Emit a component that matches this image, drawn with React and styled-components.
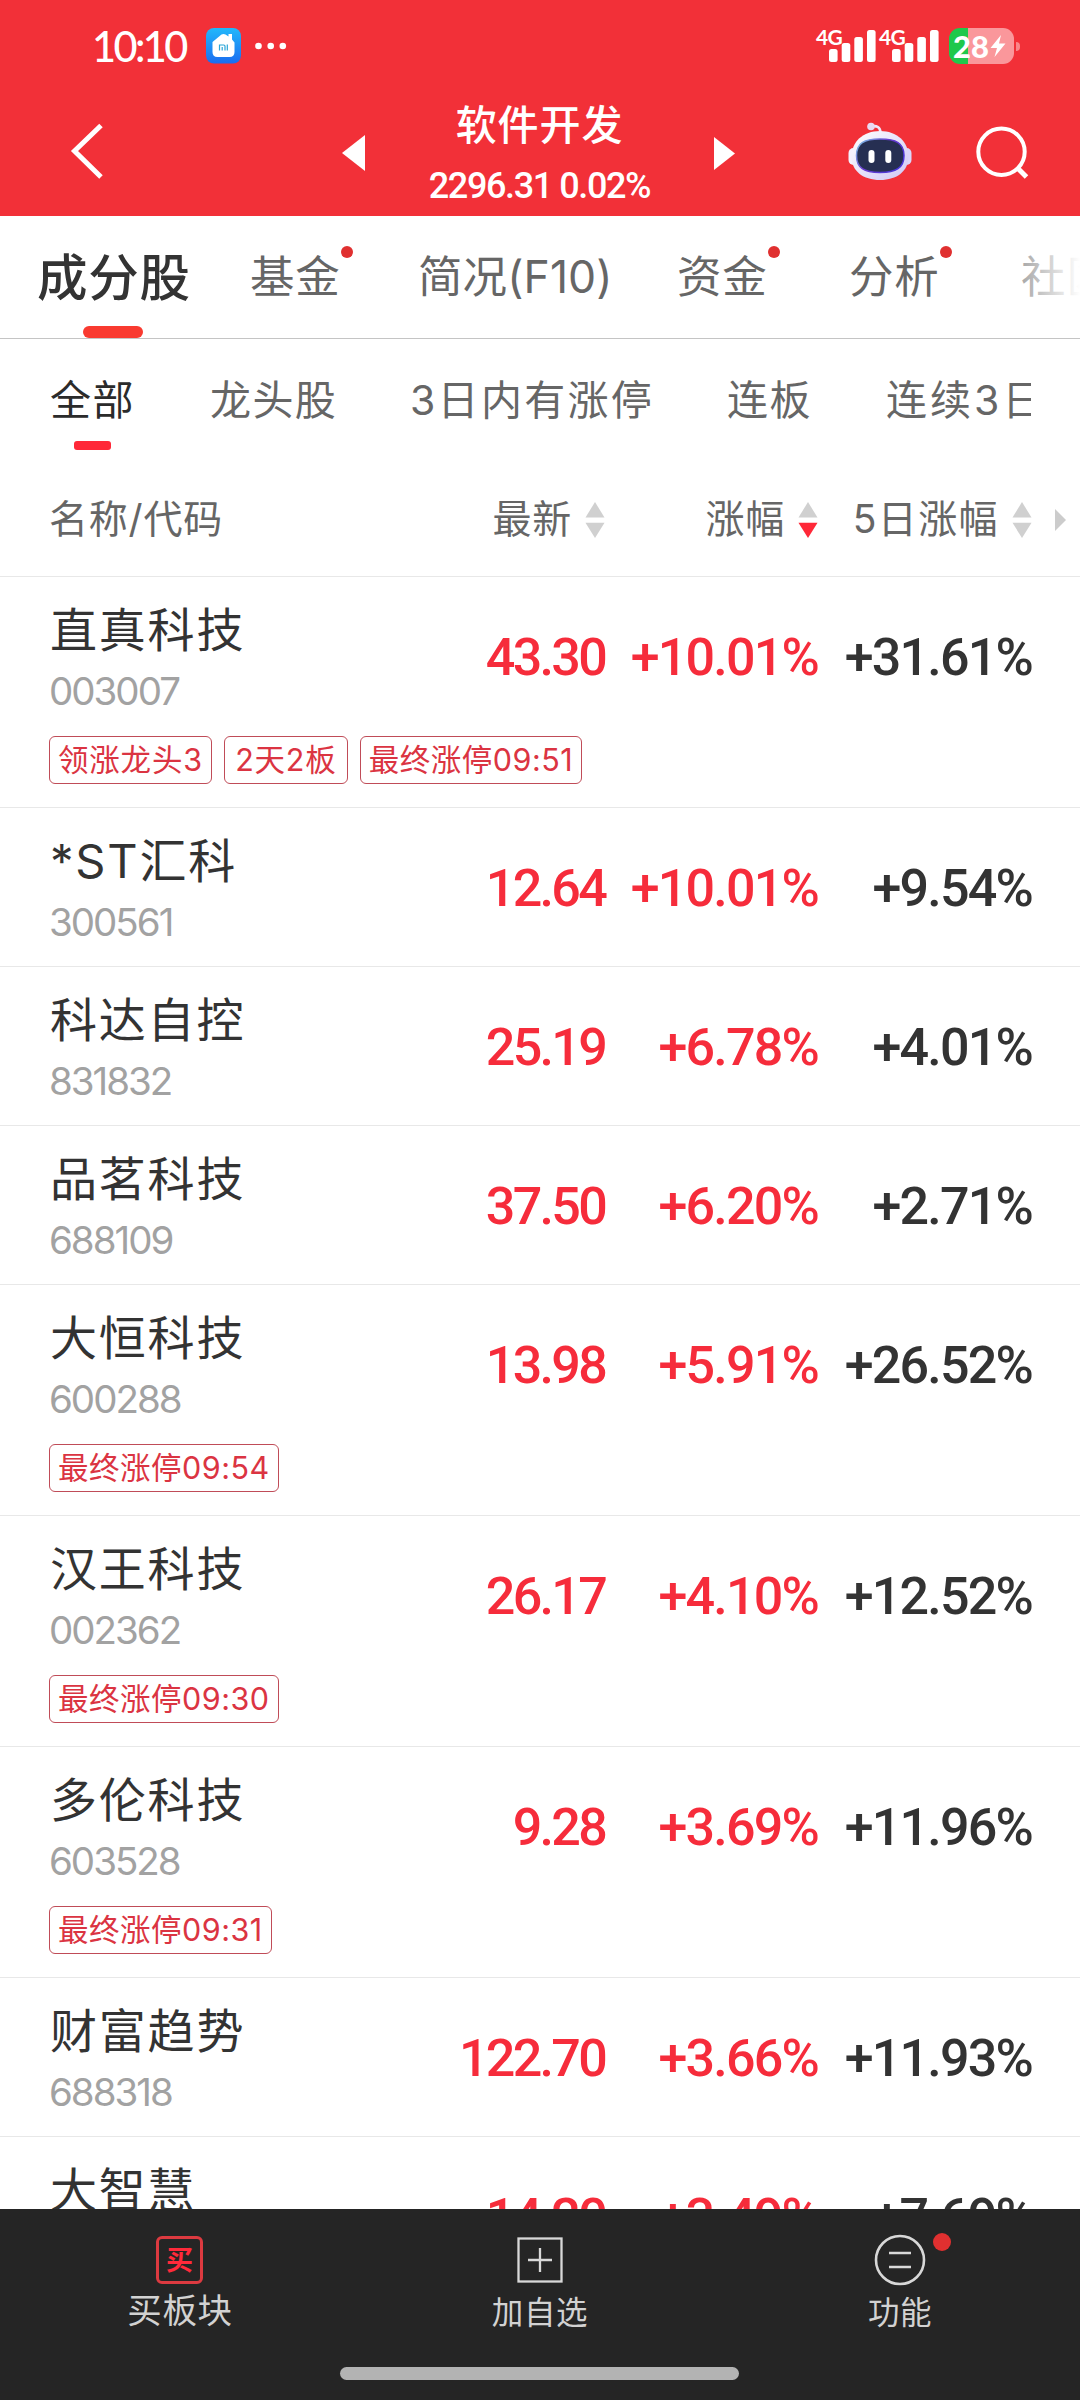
import React from 'react';
import styled, { createGlobalStyle } from 'styled-components';

const Global = createGlobalStyle`
  *, *::before, *::after { box-sizing: border-box; }
  html, body { margin: 0; padding: 0; background: #fff; }
  body { font-family: Inter, "Noto Sans CJK SC", sans-serif; color: #333; }
  svg { display: block; }
`;

const Screen = styled.div`
  width: 1080px;
  height: 2400px;
  display: flex;
  flex-direction: column;
  overflow: hidden;
  background: #fff;
`;

const Top = styled.header`
  flex: none;
  height: 216px;
  background: #f23038;
  color: #fff;
`;

const StatusBar = styled.div`
  height: 92px;
  padding: 0 60px 0 92px;
  display: flex;
  align-items: center;
`;

const Clock = styled.span`
  width: 114px;
  font: 500 41.5px/60px Lato, "Noto Sans", sans-serif;
  letter-spacing: -2.6px;
  white-space: nowrap;
`;

const Dots = styled.svg`
  margin-left: 14px;
`;

const StatusRight = styled.div`
  margin-left: auto;
  display: flex;
  align-items: center;
`;

const SignalBox = styled.div`
  width: 63px;
  height: 34px;
  position: relative;
`;

const Net = styled.span`
  position: absolute;
  left: 0;
  top: -1px;
  font: 700 21px/18px Lato, sans-serif;
  letter-spacing: -0.6px;
`;

const Battery = styled.div`
  margin-left: 7px;
  width: 65px;
  height: 36px;
  border-radius: 11px;
  padding-left: 4px;
  display: flex;
  align-items: center;
  background: linear-gradient(90deg, #1fc84b 0 19px, #fa979b 19px);
  font: 900 31px/36px Lato, sans-serif;
`;

const Nub = styled.i`
  width: 4px;
  height: 9px;
  margin-left: 2px;
  border-radius: 0 4px 4px 0;
  background: #f9868a;
`;

const NavBar = styled.div`
  height: 124px;
  display: grid;
  grid-template-columns: 342px 1fr 342px;
`;

const NavSide = styled.div`
  display: flex;
  align-items: flex-start;
  padding: ${(p) => p.$pad};
  gap: ${(p) => p.$gap || '0'};
`;

const NavCenter = styled.div`
  display: flex;
  justify-content: space-between;
  align-items: flex-start;
  margin-right: 3px;
`;

const Arrow = styled.svg`
  margin-top: ${(p) => p.$top}px;
`;

const Titles = styled.div`
  padding-top: 5px;
  text-align: center;
  white-space: nowrap;
`;

const Title = styled.div`
  font: 500 41px/50px "Noto Sans CJK SC", sans-serif;
  letter-spacing: 0.9px;
`;

const IndexValue = styled.div`
  margin-top: 14px;
  font: 500 36px/50px Roboto, sans-serif;
  letter-spacing: -1.4px;
`;

const Tabs = styled.nav`
  flex: none;
  height: 123px;
  padding-left: 37px;
  display: flex;
  border-bottom: 1px solid #c4c4c4;
  position: relative;
  overflow: hidden;
`;

const Tab = styled.div`
  flex: none;
  width: ${(p) => p.$w}px;
  position: relative;
  white-space: nowrap;
  font-size: ${(p) => (p.$active ? 50.5 : 44.5)}px;
  font-weight: ${(p) => (p.$active ? 500 : 400)};
  letter-spacing: ${(p) => p.$ls ?? 0.8}px;
  line-height: 123px;
  color: ${(p) => (p.$active ? '#333' : '#666')};
`;

const TabLine = styled.i`
  position: absolute;
  left: 46px;
  bottom: 0;
  width: 60px;
  height: 12px;
  border-radius: 6px;
  background: #f93a30;
`;

const RedDot = styled.i`
  position: absolute;
  left: ${(p) => p.$x}px;
  top: ${(p) => p.$y}px;
  width: ${(p) => p.$d}px;
  height: ${(p) => p.$d}px;
  border-radius: 50%;
  background: #e03030;
`;

const Fade = styled.i`
  position: absolute;
  right: 0;
  top: 0;
  width: 104px;
  height: 100%;
  background: linear-gradient(90deg, rgba(255, 255, 255, 0), #fff);
`;

const Filters = styled.nav`
  flex: none;
  height: 124px;
  margin: 0 49px 0 50px;
  display: flex;
  overflow: hidden;
`;

const Filter = styled.div`
  flex: none;
  width: ${(p) => p.$w}px;
  position: relative;
  white-space: nowrap;
  font-size: 41px;
  letter-spacing: ${(p) => p.$ls ?? 1.4}px;
  line-height: 122px;
  color: ${(p) => (p.$active ? '#2b2b2b' : '#666')};
`;

const FilterLine = styled.i`
  position: absolute;
  left: 24px;
  top: 102px;
  width: 37px;
  height: 9px;
  border-radius: 3px;
  background: #ff2838;
`;

const columns = `
  display: grid;
  grid-template-columns: 1fr 180px 213px 214px;
  padding: 0 48px 0 49px;
`;

const ColumnHead = styled.div`
  flex: none;
  height: 114px;
  ${columns}
  padding-right: 0;
  grid-template-columns: 1fr 180px 213px 214px 48px;
  align-items: center;
  border-bottom: 1px solid #e8e8e8;
  font-size: 39px;
  letter-spacing: 0.8px;
  color: #666;
  white-space: nowrap;
`;

const HeadCell = styled.div`
  display: flex;
  align-items: center;
  justify-content: ${(p) => (p.$start ? 'flex-start' : 'flex-end')};
  gap: 13px;
  height: 110px;
`;

const HeadText = styled.span`
  line-height: 108px;
  padding-bottom: 2px;
  letter-spacing: ${(p) => p.$ls ?? 0.8}px;
`;

const More = styled.svg`
  margin-left: 23px;
`;

const List = styled.main`
  flex: 1;
  min-height: 0;
  overflow: hidden;
`;

const Row = styled.section`
  height: ${(p) => (p.$tall ? 231 : 159)}px;
  ${columns}
  grid-template-rows: 159px auto;
  border-bottom: 1px solid #e8e8e8;
`;

const Identity = styled.div`
  padding: 23px 0 0 1px;
  white-space: nowrap;
`;

const Name = styled.div`
  font-size: 47px;
  letter-spacing: 1.8px;
  line-height: 60px;
  color: #333;
`;

const Code = styled.div`
  margin-top: 11px;
  font: 400 38.5px/40px Inter, sans-serif;
  letter-spacing: -2px;
  margin-left: -1px;
  color: #a2a2a2;
`;

const Num = styled.div`
  padding-top: 51px;
  font: 500 52px/60px Roboto, sans-serif;
  letter-spacing: ${(p) => p.$ls ?? -1.8}px;
  text-align: right;
  white-space: nowrap;
  color: ${(p) => (p.$up ? '#f62c3b' : '#333')};
`;

const Tags = styled.div`
  grid-column: 1 / -1;
  display: flex;
  gap: 12px;
`;

const Tag = styled.span`
  height: 48px;
  min-width: 124px;
  padding: 0 8px;
  border: 1.5px solid #c04c58;
  border-radius: 6px;
  font-size: 30.5px;
  letter-spacing: ${(p) => p.$ls}px;
  line-height: 45px;
  text-align: center;
  color: #db3442;
  white-space: nowrap;
`;

const Bottom = styled.footer`
  flex: none;
  height: 191px;
  background: #252525;
`;

const Actions = styled.div`
  height: 158px;
  display: grid;
  grid-template-columns: repeat(3, 360px);
`;

const Action = styled.div`
  display: flex;
  flex-direction: column;
  align-items: center;
  color: #d2d2d2;
`;

const IconSlot = styled.div`
  height: 52px;
  margin-top: 25px;
  display: flex;
  align-items: center;
  position: relative;
`;

const BuyIcon = styled.div`
  width: 47px;
  height: 48px;
  margin: 0 1px 1px 0;
  border: 3px solid #dc3a40;
  border-radius: 6px;
  text-align: center;
  font: 700 27px/40px "Noto Sans CJK SC", sans-serif;
  color: #ff2a3a;
`;

const ActionLabel = styled.div`
  font-size: ${(p) => p.$size}px;
  letter-spacing: 0.6px;
  line-height: 50px;
  margin-top: ${(p) => p.$top}px;
`;

const HomeBar = styled.div`
  width: 399px;
  height: 13px;
  margin: 0 0 0 340px;
  border-radius: 7px;
  background: #b3b3b3;
`;

const Signal = () => (
  <SignalBox>
    <Net>4G</Net>
    <svg width="63" height="34" viewBox="0 0 63 34" fill="#fff">
      <rect x="13" y="20" width="8.6" height="13" rx="2.5" />
      <rect x="25.7" y="14" width="8.6" height="19" rx="2.5" />
      <rect x="38.3" y="8" width="8.6" height="25" rx="2.5" />
      <rect x="51" y="1" width="8.6" height="32" rx="2.5" />
    </svg>
  </SignalBox>
);

const HomeApp = () => (
  <svg width="35" height="36" viewBox="0 0 35 36">
    <defs>
      <linearGradient id="app" x1="0" y1="0" x2="0" y2="1">
        <stop offset="0" stopColor="#22b8fb" />
        <stop offset="1" stopColor="#1a6cf0" />
      </linearGradient>
    </defs>
    <rect width="35" height="35.5" rx="8" fill="url(#app)" />
    <path d="M6.5 14 15.500 6.500q2-1.200 4 0l3 2V6h3.500v5.500l2.500 3v9.500q0 5-5 5H11.500q-5 0-5-5z" fill="#fff" />
    <path d="M13.500 22.500V17h4.200q1.300 0 1.300 1.300V22.500M16.200 19V22.500M21.300 16.400V22.500" fill="none" stroke="#2aa5d8" strokeWidth="1.200" />
  </svg>
);

const Robot = () => (
  <svg width="64" height="60" viewBox="0 0 64 60">
    <defs>
      <linearGradient id="shell" x1="0" y1="0" x2="1" y2="1">
        <stop offset="0" stopColor="#ffffff" />
        <stop offset="1" stopColor="#cfc6f5" />
      </linearGradient>
      <linearGradient id="rim" x1="0" y1="0" x2="1" y2="0.6">
        <stop offset="0" stopColor="#7fd0e8" />
        <stop offset="0.5" stopColor="#6a3ccf" />
        <stop offset="1" stopColor="#4a35d8" />
      </linearGradient>
    </defs>
    <path d="M23 5.500q9-2 9.500 6" fill="none" stroke="#efe6fa" strokeWidth="2.600" />
    <circle cx="23" cy="5.500" r="3.800" fill="#e9d9f2" />
    <rect x="0.500" y="27" width="10" height="17" rx="5" fill="#f4f0fd" />
    <rect x="53.500" y="27" width="10" height="17" rx="5" fill="#dcd6fa" />
    <path d="M32 10C49 10 60.500 21 60.500 35.500S49 59 32 59 3.500 50 3.500 35.500 15 10 32 10z" fill="url(#shell)" />
    <path d="M32 18C48 18 56 22 56 34.500S48 51.500 32 51.500 8.500 47 8.500 34.500 16 18 32 18z" fill="#262f52" stroke="url(#rim)" strokeWidth="1.500" />
    <rect x="20.500" y="29" width="6" height="13" rx="3" fill="#fff" />
    <rect x="37.300" y="29" width="6" height="13" rx="3" fill="#fff" />
  </svg>
);

const Sort = ({ desc }) => (
  <svg width="20" height="38" viewBox="0 0 20 38">
    <path d="M10 1 19.500 16.500H.5z" fill="#d0d0d0" />
    <path d="M10 37 .5 21.800H19.500z" fill={desc ? '#ff2838' : '#d0d0d0'} />
  </svg>
);

const rows = [
  { name: '直真科技', code: '003007', price: '43.30', chg: '+10.01%', five: '+31.61%', tags: ['领涨龙头3', '2天2板', '最终涨停09:51'] },
  { name: '*ST汇科', code: '300561', price: '12.64', chg: '+10.01%', five: '+9.54%' },
  { name: '科达自控', code: '831832', price: '25.19', chg: '+6.78%', five: '+4.01%' },
  { name: '品茗科技', code: '688109', price: '37.50', chg: '+6.20%', five: '+2.71%' },
  { name: '大恒科技', code: '600288', price: '13.98', chg: '+5.91%', five: '+26.52%', tags: ['最终涨停09:54'] },
  { name: '汉王科技', code: '002362', price: '26.17', chg: '+4.10%', five: '+12.52%', tags: ['最终涨停09:30'] },
  { name: '多伦科技', code: '603528', price: '9.28', chg: '+3.69%', five: '+11.96%', tags: ['最终涨停09:31'] },
  { name: '财富趋势', code: '688318', price: '122.70', chg: '+3.66%', five: '+11.93%' },
  { name: '大智慧', price: '14.20', chg: '+3.49%', five: '+7.69%' },
];

export default function App() {
  return (
    <Screen>
      <Global />
      <Top>
        <StatusBar>
          <Clock>10:10</Clock>
          <HomeApp />
          <Dots width="32" height="8" viewBox="0 0 32 8" fill="#fff">
            <circle cx="3.500" cy="4" r="3.300" />
            <circle cx="15.700" cy="4" r="3.300" />
            <circle cx="27.800" cy="4" r="3.300" />
          </Dots>
          <StatusRight>
            <Signal />
            <Signal />
            <Battery>
              28
              <svg width="18" height="24" viewBox="0 0 18 24" fill="#fff">
                <path d="M12 1 1.500 14H8L5.500 23 16.500 9.500H10z" />
              </svg>
            </Battery>
            <Nub />
          </StatusRight>
        </StatusBar>
        <NavBar>
          <NavSide $pad="30px 0 0 70px">
            <svg width="36" height="60" viewBox="0 0 36 60">
              <path d="M31 3.500 4.500 29 31 55" fill="none" stroke="#fff" strokeWidth="5" />
            </svg>
          </NavSide>
          <NavCenter>
            <Arrow $top={43} width="23" height="36" viewBox="0 0 23 36" fill="#fff">
              <path d="M23 0V36L0 18z" />
            </Arrow>
            <Titles>
              <Title>软件开发</Title>
              <IndexValue>2296.31 0.02%</IndexValue>
            </Titles>
            <Arrow $top={45} width="21" height="33" viewBox="0 0 21 33" fill="#fff">
              <path d="M0 0V33L21 16.500z" />
            </Arrow>
          </NavCenter>
          <NavSide $pad="29px 0 0 110px" $gap="62px">
            <Robot />
            <svg width="56" height="60" viewBox="0 0 56 60" fill="none" stroke="#fff" strokeWidth="4">
              <circle cx="27.500" cy="30.700" r="23.200" />
              <path d="M43.500 47 52.500 56" strokeWidth="5" />
            </svg>
          </NavSide>
        </NavBar>
      </Top>

      <Tabs>
        <Tab $active $w={213}>成分股<TabLine /></Tab>
        <Tab $w={168}>基金<RedDot $x={91} $y={30} $d={12} /></Tab>
        <Tab $w={259} $ls={0.1}>简况(F10)</Tab>
        <Tab $w={172}>资金<RedDot $x={91} $y={30} $d={12} /></Tab>
        <Tab $w={172}>分析<RedDot $x={91} $y={30} $d={12} /></Tab>
        <Tab $w={100}>社区</Tab>
        <Fade />
      </Tabs>

      <Filters>
        <Filter $active $w={160}>全部<FilterLine /></Filter>
        <Filter $w={200}>龙头股</Filter>
        <Filter $w={317} $ls={2.3}>3日内有涨停</Filter>
        <Filter $w={159}>连板</Filter>
        <Filter $w={170} $ls={3}>连续3日</Filter>
      </Filters>

      <ColumnHead>
        <HeadCell $start><HeadText>名称/代码</HeadText></HeadCell>
        <HeadCell><HeadText>最新</HeadText><Sort /></HeadCell>
        <HeadCell><HeadText>涨幅</HeadText><Sort desc /></HeadCell>
        <HeadCell><HeadText $ls={1.4}>5日涨幅</HeadText><Sort /></HeadCell>
        <More width="11" height="22" viewBox="0 0 11 22">
          <path d="M0 0V22L11 11z" fill="#ccc" />
        </More>
      </ColumnHead>

      <List>
        {rows.map((r) => (
          <Row key={r.name} $tall={!!r.tags}>
            <Identity>
              <Name>{r.name}</Name>
              {r.code && <Code>{r.code}</Code>}
            </Identity>
            <Num $up $ls={-2.7}>{r.price}</Num>
            <Num $up>{r.chg}</Num>
            <Num>{r.five}</Num>
            {r.tags && (
              <Tags>
                {r.tags.map((t) => (
                  <Tag key={t} $ls={t.length < 8 ? 0.8 : 0.5}>{t}</Tag>
                ))}
              </Tags>
            )}
          </Row>
        ))}
      </List>

      <Bottom>
        <Actions>
          <Action>
            <IconSlot><BuyIcon>买</BuyIcon></IconSlot>
            <ActionLabel $size={34.5} $top={0}>买板块</ActionLabel>
          </Action>
          <Action>
            <IconSlot>
              <svg width="46" height="46" viewBox="0 0 46 46" fill="none" stroke="#d8d8d8" strokeWidth="2.300">
                <rect x="1.500" y="1.500" width="43" height="43" />
                <path d="M11 23H35M23 11V35" />
              </svg>
            </IconSlot>
            <ActionLabel $size={31.5} $top={2}>加自选</ActionLabel>
          </Action>
          <Action>
            <IconSlot>
              <svg width="52" height="52" viewBox="0 0 52 52" fill="none" stroke="#d8d8d8" strokeWidth="2.600">
                <circle cx="26" cy="26" r="24" />
                <path d="M15 19H37M15 33H37" />
              </svg>
              <RedDot $x={59} $y={-1} $d={18} />
            </IconSlot>
            <ActionLabel $size={31.5} $top={2}>功能</ActionLabel>
          </Action>
        </Actions>
        <HomeBar />
      </Bottom>
    </Screen>
  );
}
